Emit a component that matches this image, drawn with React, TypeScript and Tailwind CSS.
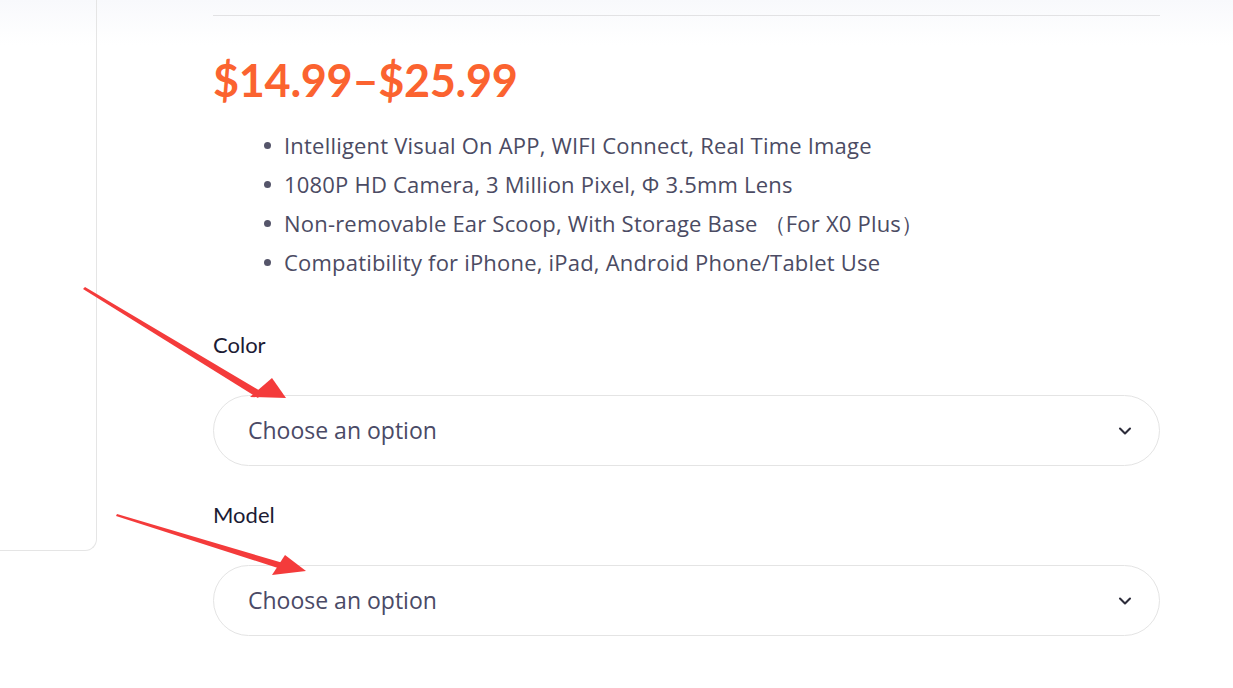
import { ChevronDown } from "lucide-react";

const features = [
  "Intelligent Visual On APP, WIFI Connect, Real Time Image",
  "1080P HD Camera, 3 Million Pixel, Φ 3.5mm Lens",
  "Non-removable Ear Scoop, With Storage Base （For X0 Plus）",
  "Compatibility for iPhone, iPad, Android Phone/Tablet Use",
];

function OptionSelect({ label }: { label: string }) {
  return (
    <div className="flex flex-col">
      <div className="text-[22px] leading-[28px] text-[#1c1b34] font-['Lato',sans-serif] mb-[36px]">{label}</div>
      <div className="h-[71px] rounded-full border border-[#e4e4e4] bg-white flex items-center justify-between pl-[34px] pr-[24px]">
        <span className="text-[23px] text-[#4a4a66] font-['Open_Sans',sans-serif]">Choose an option</span>
        <ChevronDown className="w-[20px] h-[20px] text-[#2c2c3a]" strokeWidth={2.5} />
      </div>
    </div>
  );
}

export default function App() {
  return (
    <div className="relative w-[1233px] h-[688px] overflow-hidden bg-white font-['Lato',sans-serif]">
      <div className="flex h-full bg-[linear-gradient(to_bottom,#f8f9fc,#ffffff_45px)]">
        {/* left column */}
        <div className="w-[97px] h-[551px] border-r border-b border-[#e5e5e5] rounded-br-[12px] shrink-0" />

        {/* product info */}
        <div className="ml-[116px] w-[947px] flex flex-col">
          <div className="mt-[15px] border-t border-[#e2e2e4]" />
          <div className="mt-[36px] text-[45px] leading-[56px] font-bold text-[#fb6330] tracking-[-0.3px]">
            $14.99–$25.99
          </div>
          <ul className="mt-[22px] ml-[71px] flex flex-col gap-[9px]">
            {features.map((f) => (
              <li key={f} className="flex items-center text-[22px] leading-[30px] tracking-[0.2px] text-[#4b4b63] font-['Open_Sans',sans-serif]">
                <span className="w-[7px] h-[7px] rounded-full bg-[#55556a] mr-[13px] -ml-[20px] shrink-0" />
                {f}
              </li>
            ))}
          </ul>
          <div className="mt-[54px] flex flex-col gap-[35px]">
            <OptionSelect label="Color" />
            <OptionSelect label="Model" />
          </div>
        </div>
      </div>

      {/* annotation arrows */}
      <svg className="absolute inset-0 pointer-events-none" width="1233" height="688">
        <polygon points="85,287 262,392 258,398 83,289" fill="#f43b3b" />
        <polygon points="286,398 250,397 272,378" fill="#f43b3b" />
        <polygon points="117,514 283,563 281,569 116,516" fill="#f43b3b" />
        <polygon points="306,571 272,575 285,555" fill="#f43b3b" />
      </svg>
    </div>
  );
}
